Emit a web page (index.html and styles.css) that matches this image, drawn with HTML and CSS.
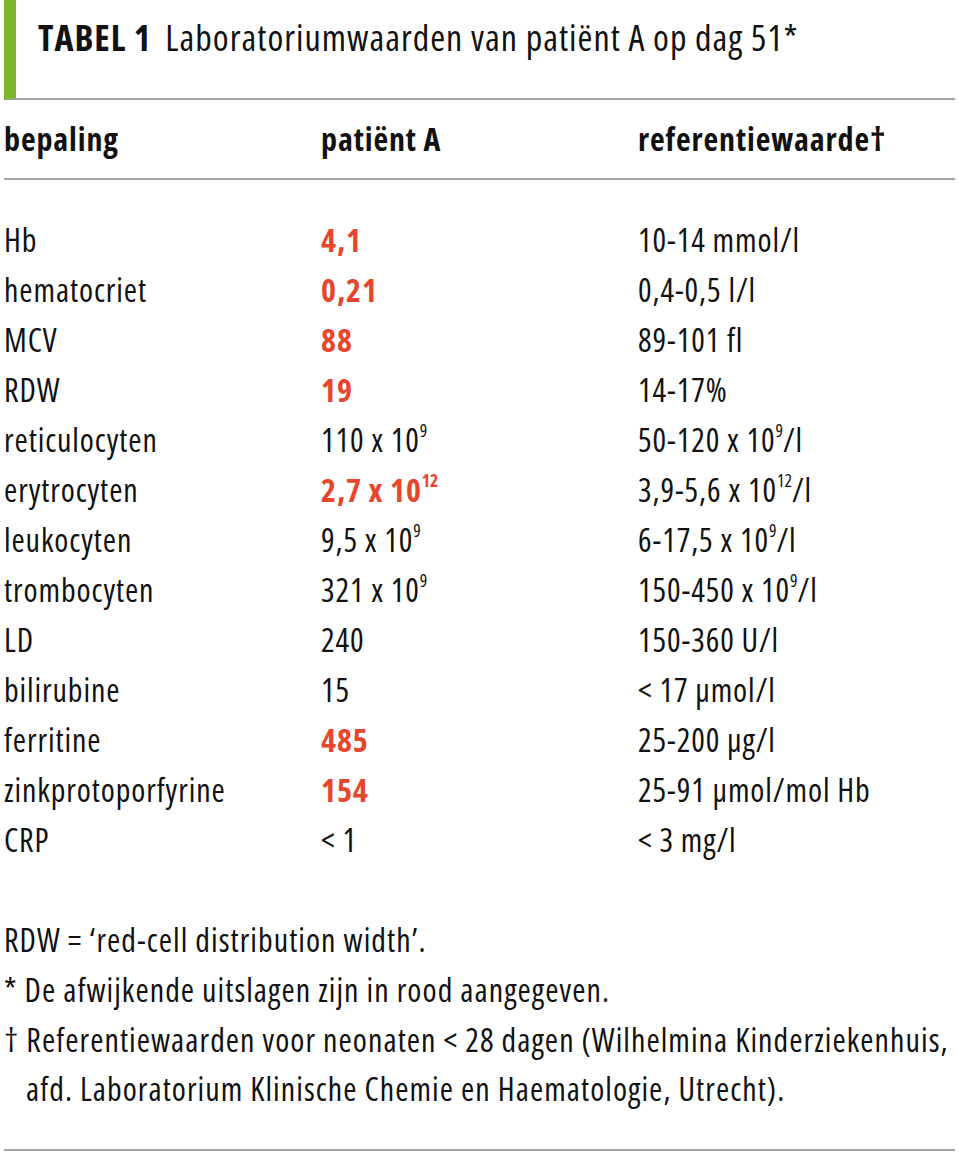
FILE: index.html
```html
<!DOCTYPE html>
<html lang="nl">
<head>
<meta charset="utf-8">
<title>Tabel 1</title>
<link rel="stylesheet" href="styles.css">
</head>
<body>
<div class="page">
  <header class="title-bar">
    <h1 class="title"><span class="title-label">TABEL 1</span> Laboratoriumwaarden van patiënt A op dag 51*</h1>
  </header>
  <div class="lab-table">
    <div class="row head">
      <div class="cell">bepaling</div>
      <div class="cell">patiënt A</div>
      <div class="cell">referentiewaarde†</div>
    </div>
    <div class="body">
      <div class="row"><div class="cell">Hb</div><div class="cell abn">4,1</div><div class="cell">10-14 mmol/l</div></div>
      <div class="row"><div class="cell">hematocriet</div><div class="cell abn">0,21</div><div class="cell">0,4-0,5 l/l</div></div>
      <div class="row"><div class="cell">MCV</div><div class="cell abn">88</div><div class="cell">89-101 fl</div></div>
      <div class="row"><div class="cell">RDW</div><div class="cell abn">19</div><div class="cell">14-17%</div></div>
      <div class="row"><div class="cell">reticulocyten</div><div class="cell">110 x 10<sup>9</sup></div><div class="cell">50-120 x 10<sup>9</sup>/l</div></div>
      <div class="row"><div class="cell">erytrocyten</div><div class="cell abn">2,7 x 10<sup>12</sup></div><div class="cell">3,9-5,6 x 10<sup>12</sup>/l</div></div>
      <div class="row"><div class="cell">leukocyten</div><div class="cell">9,5 x 10<sup>9</sup></div><div class="cell">6-17,5 x 10<sup>9</sup>/l</div></div>
      <div class="row"><div class="cell">trombocyten</div><div class="cell">321 x 10<sup>9</sup></div><div class="cell">150-450 x 10<sup>9</sup>/l</div></div>
      <div class="row"><div class="cell">LD</div><div class="cell">240</div><div class="cell">150-360 U/l</div></div>
      <div class="row"><div class="cell">bilirubine</div><div class="cell">15</div><div class="cell">&lt; 17 µmol/l</div></div>
      <div class="row"><div class="cell">ferritine</div><div class="cell abn">485</div><div class="cell">25-200 µg/l</div></div>
      <div class="row"><div class="cell">zinkprotoporfyrine</div><div class="cell abn">154</div><div class="cell">25-91 µmol/mol Hb</div></div>
      <div class="row"><div class="cell">CRP</div><div class="cell">&lt; 1</div><div class="cell">&lt; 3 mg/l</div></div>
    </div>
  </div>
  <div class="notes">
    <p class="note">RDW = ‘red-cell distribution width’.</p>
    <p class="note">* De afwijkende uitslagen zijn in rood aangegeven.</p>
    <p class="note hang">† Referentiewaarden voor neonaten &lt; 28 dagen (Wilhelmina Kinderziekenhuis,<br>afd. Laboratorium Klinische Chemie en Haematologie, Utrecht).</p>
  </div>
</div>
</body>
</html>
```
FILE: styles.css
```css
html, body {
  margin: 0;
  padding: 0;
  background: #ffffff;
}

body {
  font-family: "Open Sans", "DejaVu Sans Condensed", sans-serif;
  font-stretch: 75%;
  color: #111111;
}

.page {
  width: 951px;
  margin: 0 0 0 4px;
  padding-bottom: 14px;
}

.title-bar {
  height: 100px;
  box-sizing: border-box;
  border-left: 12px solid #7cb72e;
  border-bottom: 2px solid #a3a3a3;
  padding: 13px 0 0 22px;
}

.title {
  margin: 0;
  font-size: 36px;
  line-height: 50px;
  font-weight: normal;
  letter-spacing: 1px;
  white-space: nowrap;
}

.title-label {
  font-weight: bold;
  margin-right: 6px;
}

.lab-table {
  font-size: 32px;
  letter-spacing: 0.9px;
}

.row {
  display: grid;
  grid-template-columns: 317px 317px 1fr;
  height: 50px;
  align-items: center;
  line-height: 50px;
}

.row.head {
  height: 78px;
  line-height: 78px;
  font-weight: bold;
  border-bottom: 2px solid #a3a3a3;
}

.body {
  padding-top: 35px;
}

.cell {
  white-space: nowrap;
}

.abn {
  color: #e8452e;
  font-weight: bold;
}

sup {
  font-size: 0.55em;
  line-height: 0;
  vertical-align: 0;
  position: relative;
  top: -0.85em;
  letter-spacing: 0;
}

.notes {
  margin-top: 50px;
  padding-bottom: 36px;
  border-bottom: 2px solid #a3a3a3;
  font-size: 32px;
  letter-spacing: 1.05px;
}

.note {
  margin: 0;
  line-height: 50px;
  white-space: nowrap;
}

.note.hang {
  padding-left: 22px;
  text-indent: -22px;
  line-height: 49px;
}
```
